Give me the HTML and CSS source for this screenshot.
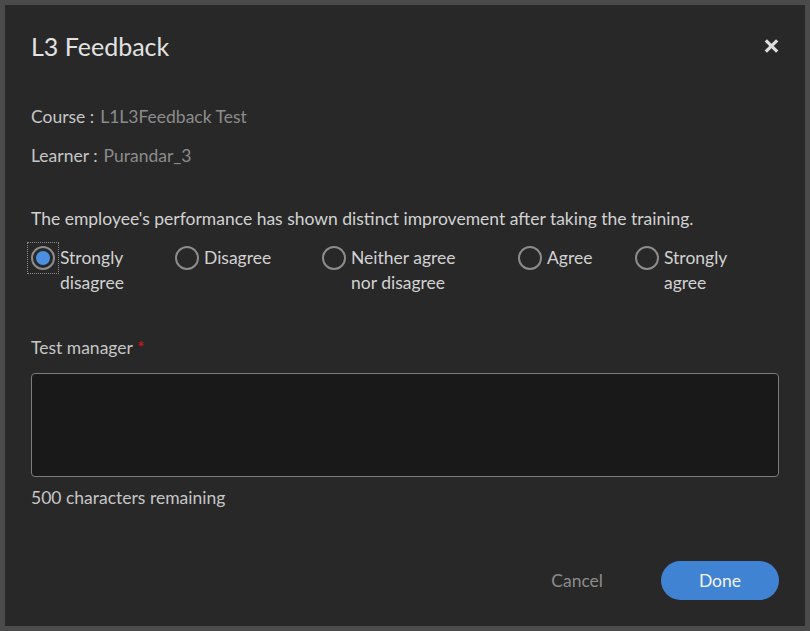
FILE: index.html
```html
<!DOCTYPE html>
<html lang="en">
<head>
<meta charset="utf-8">
<title>L3 Feedback</title>
<link rel="stylesheet" href="styles.css">
</head>
<body>
<div class="dialog">
  <div class="header">
    <h1 class="title">L3 Feedback</h1>
    <button class="close" aria-label="Close">
      <svg width="17" height="16" viewBox="0 0 17 16"><path d="M2.8 2.3 L14.2 13.7 M14.2 2.3 L2.8 13.7" stroke="#dcdcdc" stroke-width="3.2" stroke-linecap="butt"/></svg>
    </button>
  </div>
  <div class="meta">
    <div class="meta-row"><span class="meta-label">Course :</span><span class="meta-value">L1L3Feedback Test</span></div>
    <div class="meta-row"><span class="meta-label">Learner :</span><span class="meta-value">Purandar_3</span></div>
  </div>
  <p class="question">The employee's performance has shown distinct improvement after taking the training.</p>
  <div class="options">
    <label class="option"><span class="radio-wrap focused"><span class="radio checked"></span></span><span class="opt-text">Strongly<br>disagree</span></label>
    <label class="option"><span class="radio-wrap"><span class="radio"></span></span><span class="opt-text">Disagree</span></label>
    <label class="option"><span class="radio-wrap"><span class="radio"></span></span><span class="opt-text">Neither agree<br>nor disagree</span></label>
    <label class="option"><span class="radio-wrap"><span class="radio"></span></span><span class="opt-text">Agree</span></label>
    <label class="option"><span class="radio-wrap"><span class="radio"></span></span><span class="opt-text">Strongly<br>agree</span></label>
  </div>
  <div class="field-label">Test manager <span class="req">*</span></div>
  <div class="textarea"></div>
  <div class="remaining">500 characters remaining</div>
  <div class="footer">
    <button class="btn-cancel">Cancel</button>
    <button class="btn-done">Done</button>
  </div>
</div>
</body>
</html>
```
FILE: styles.css
```css
html, body {
  margin: 0;
  padding: 0;
  background: #4b4b4b;
}
body {
  padding: 5px;
  font-family: Lato, "Open Sans", sans-serif;
  color: #d2d2d2;
}
.dialog {
  width: 800px;
  height: 621px;
  box-sizing: border-box;
  background: #282828;
  padding: 0 26px;
  display: flex;
  flex-direction: column;
}
.header {
  display: flex;
  justify-content: space-between;
  align-items: center;
  height: 82px;
}
.title {
  margin: 0;
  font-weight: 400;
  font-size: 25px;
  color: #e2e2e2;
}
.close {
  background: none;
  border: 0;
  padding: 0;
  width: 17px;
  height: 16px;
  display: flex;
  margin-right: -1px;
}
.meta {
  display: flex;
  flex-direction: column;
  gap: 15px;
  margin-top: 18px;
}
.meta-row {
  font-size: 17.5px;
  line-height: 24px;
}
.meta-label {
  color: #c6c6c6;
  margin-right: 6px;
}
.meta-value {
  color: #8c8c8c;
}
.question {
  margin: 39px 0 0;
  font-size: 17.5px;
  line-height: 24px;
  color: #d2d2d2;
}
.options {
  display: grid;
  grid-template-columns: 144px 147px 196px 117px auto;
  margin: 11px 0 0 -4px;
}
.option {
  display: flex;
  align-items: flex-start;
  font-size: 17.5px;
  line-height: 25px;
  color: #d2d2d2;
}
.radio-wrap {
  padding: 4px;
  flex: none;
  margin-right: 1px;
}
.radio-wrap.focused {
  outline: 1px dotted #8a8a8a;
  outline-offset: -1px;
}
.opt-text {
  padding-top: 2.5px;
}
.radio {
  box-sizing: border-box;
  width: 24px;
  height: 24px;
  border: 2px solid #8c8c8c;
  border-radius: 50%;
  display: flex;
  align-items: center;
  justify-content: center;
}
.radio.checked::after {
  content: "";
  width: 14px;
  height: 14px;
  border-radius: 50%;
  background: #4a8fe0;
}
.field-label {
  margin-top: 41px;
  font-size: 17.5px;
  line-height: 24px;
  color: #c6c6c6;
}
.req {
  color: #e01010;
}
.textarea {
  margin-top: 13px;
  height: 104px;
  box-sizing: border-box;
  border: 1px solid #7c7c7c;
  border-radius: 4px;
  background: #191919;
}
.remaining {
  margin-top: 9px;
  font-size: 17.5px;
  line-height: 24px;
  color: #c6c6c6;
}
.footer {
  display: flex;
  justify-content: flex-end;
  align-items: center;
  margin-top: auto;
  margin-bottom: 26px;
  gap: 58px;
}
.btn-cancel {
  background: none;
  border: 0;
  font-family: inherit;
  font-size: 17.5px;
  color: #8c8c8c;
  padding: 0;
}
.btn-done {
  width: 118px;
  height: 39px;
  border: 0;
  border-radius: 20px;
  background: #3f83d2;
  color: #f2f2f2;
  font-family: inherit;
  font-size: 17.5px;
}
```
